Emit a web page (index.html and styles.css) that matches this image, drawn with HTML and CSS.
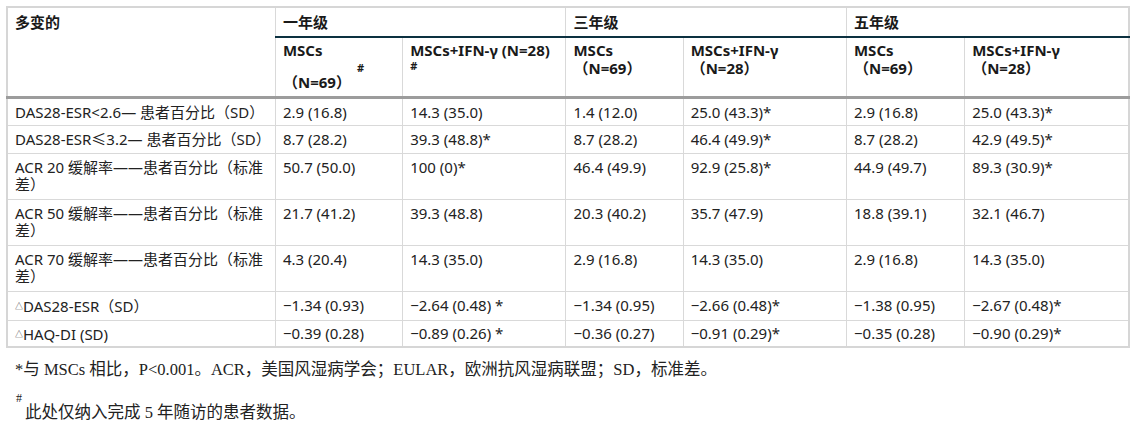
FILE: index.html
```html
<!DOCTYPE html>
<html lang="zh">
<head>
<meta charset="utf-8">
<link rel="stylesheet" href="styles.css">
</head>
<body>
<table class="tbl">
  <colgroup>
    <col class="c1"><col class="c2"><col class="c3"><col class="c4"><col class="c5"><col class="c6"><col class="c7">
  </colgroup>
  <thead>
    <tr class="h1">
      <th rowspan="2" class="var">多变的</th>
      <th colspan="2" class="year">一年级</th>
      <th colspan="2" class="year">三年级</th>
      <th colspan="2" class="year">五年级</th>
    </tr>
    <tr class="h2">
      <th><div>MSCs</div><div class="pushed">（N=69）<span class="hash-up">#</span></div></th>
      <th><div>MSCs+IFN-γ (N=28)</div><div class="hash-line">#</div></th>
      <th><div>MSCs</div><div>（N=69）</div></th>
      <th><div>MSCs+IFN-γ</div><div>（N=28）</div></th>
      <th><div>MSCs</div><div>（N=69）</div></th>
      <th><div>MSCs+IFN-γ</div><div>（N=28）</div></th>
    </tr>
  </thead>
  <tbody>
    <tr class="first"><td>DAS28-ESR&lt;2.6— 患者百分比（SD）</td><td>2.9 (16.8)</td><td>14.3 (35.0)</td><td>1.4 (12.0)</td><td>25.0 (43.3)*</td><td>2.9 (16.8)</td><td>25.0 (43.3)*</td></tr>
    <tr><td>DAS28-ESR≤3.2— 患者百分比（SD）</td><td>8.7 (28.2)</td><td>39.3 (48.8)*</td><td>8.7 (28.2)</td><td>46.4 (49.9)*</td><td>8.7 (28.2)</td><td>42.9 (49.5)*</td></tr>
    <tr class="two"><td>ACR 20 缓解率——患者百分比（标准差）</td><td>50.7 (50.0)</td><td>100 (0)*</td><td>46.4 (49.9)</td><td>92.9 (25.8)*</td><td>44.9 (49.7)</td><td>89.3 (30.9)*</td></tr>
    <tr class="two"><td>ACR 50 缓解率——患者百分比（标准差）</td><td>21.7 (41.2)</td><td>39.3 (48.8)</td><td>20.3 (40.2)</td><td>35.7 (47.9)</td><td>18.8 (39.1)</td><td>32.1 (46.7)</td></tr>
    <tr class="two"><td>ACR 70 缓解率——患者百分比（标准差）</td><td>4.3 (20.4)</td><td>14.3 (35.0)</td><td>2.9 (16.8)</td><td>14.3 (35.0)</td><td>2.9 (16.8)</td><td>14.3 (35.0)</td></tr>
    <tr><td><span class="tri">△</span>DAS28-ESR（SD）</td><td>−1.34 (0.93)</td><td>−2.64 (0.48) *</td><td>−1.34 (0.95)</td><td>−2.66 (0.48)*</td><td>−1.38 (0.95)</td><td>−2.67 (0.48)*</td></tr>
    <tr class="last"><td><span class="tri">△</span>HAQ-DI (SD)</td><td>−0.39 (0.28)</td><td>−0.89 (0.26) *</td><td>−0.36 (0.27)</td><td>−0.91 (0.29)*</td><td>−0.35 (0.28)</td><td>−0.90 (0.29)*</td></tr>
  </tbody>
</table>
<div class="notes">
  <p class="note1">*与 MSCs 相比，P&lt;0.001。ACR，美国风湿病学会；EULAR，欧洲抗风湿病联盟；SD，标准差。</p>
  <p class="note2"><span class="hash-note">#</span><span class="note2-text">此处仅纳入完成 5 年随访的患者数据。</span></p>
</div>
</body>
</html>
```
FILE: styles.css
```css
html, body {
  margin: 0;
  padding: 0;
  background: #ffffff;
}
body {
  padding: 6px 0 0 6px;
  font-family: "Noto Sans", "Noto Sans CJK SC", sans-serif;
  color: #222222;
}
.tbl {
  border-collapse: collapse;
  table-layout: fixed;
  width: 1124px;
  border: 2px solid #d6d6d6;
  font-size: 15px;
  line-height: 17px;
}
.c1 { width: 268px; }
.c2 { width: 127px; }
.c3 { width: 163px; }
.c4 { width: 117px; }
.c5 { width: 163px; }
.c6 { width: 118px; }
.c7 { width: 164px; }

.tbl th, .tbl td {
  border: 1px solid #d9d9d9;
  text-align: left;
  vertical-align: top;
  padding: 5px 7px 5px 7px;
}
.tbl th {
  font-weight: 700;
  color: #1a1a1a;
  line-height: 18px;
}
.h1 th {
  height: 17px;
  padding: 5px 7px 5px 7px;
}
.h1 th.year {
  border-bottom: 2px solid #0c3140;
}
.h2 th {
  height: 52px;
  padding: 3px 7px 3px 7px;
}
.tbl thead tr.h2 th,
.tbl thead th.var {
  border-bottom: 3px solid #9c9c9c;
}
.first td {
  padding-bottom: 4px;
}
.two td {
  padding-bottom: 6px;
}
.last td {
  padding-top: 4px;
  padding-bottom: 3px;
}
.pushed {
  margin-top: 14px;
}
.hash-up {
  position: relative;
  top: -16px;
  margin-left: 6px;
  font-size: 11px;
}
.hash-line {
  font-size: 11px;
  line-height: 14px;
}
.tri {
  font-size: 8px;
  vertical-align: 3px;
  color: #444444;
}
.notes {
  font-family: "Liberation Serif", "Noto Sans CJK SC", serif;
  font-size: 16.5px;
  color: #222222;
  padding-left: 9px;
}
.notes p {
  margin: 0;
}
.note1 {
  margin-top: 12px !important;
  line-height: 20px;
}
.note2 {
  margin-top: 12px !important;
  line-height: 18px;
}
.hash-note {
  display: block;
  font-size: 12px;
  line-height: 12px;
  padding-left: 1px;
}
.note2-text {
  display: block;
  padding-left: 10px;
}
```
